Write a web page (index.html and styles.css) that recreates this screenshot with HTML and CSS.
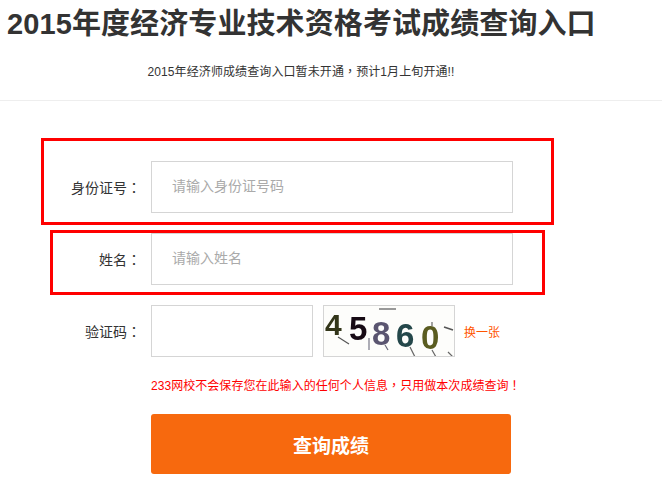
FILE: index.html
```html
<!DOCTYPE html>
<html>
<head>
<meta charset="UTF-8">
<title>2015年度经济专业技术资格考试成绩查询入口</title>
<link rel="stylesheet" href="styles.css">
</head>
<body>
<div class="header">
  <h1 class="title">2015年度经济专业技术资格考试成绩查询入口</h1>
  <p class="notice">2015年经济师成绩查询入口暂未开通<span class="punct">，</span>预计1月上旬开通!!</p>
</div>
<form class="form">
  <div class="row">
    <label class="label">身份证号<span class="punct">：</span></label>
    <input class="input" type="text" placeholder="请输入身份证号码">
  </div>
  <div class="row">
    <label class="label">姓名<span class="punct">：</span></label>
    <input class="input" type="text" placeholder="请输入姓名">
  </div>
  <div class="row">
    <label class="label">验证码<span class="punct">：</span></label>
    <input class="input input-code" type="text">
    <div class="captcha">
      <svg width="130" height="50" viewBox="0 0 130 50">
        <rect width="130" height="50" fill="#fdfdfb"/>
        <g fill="none" stroke-width="1.2">
          <path d="M55 3H72" stroke="#999" stroke-width="2"/>
          <path d="M14 31L25 38" stroke="#555"/>
          <path d="M45 32V44" stroke="#778"/>
          <path d="M61 39L64 44" stroke="#667"/>
          <path d="M86 41L91 51" stroke="#666"/>
          <path d="M108 16V20M108 44L112 51M124 46L129 51" stroke="#666"/>
          <path d="M120 21L129 24" stroke="#555" stroke-width="1.5"/>
        </g>
        <text class="digit digit-small" x="1" y="29" fill="#33361a">4</text>
        <text class="digit" x="25" y="34" fill="#160a14">5</text>
        <text class="digit" x="48" y="39" fill="#5a5570">8</text>
        <text class="digit" x="72" y="41" fill="#24474a">6</text>
        <text class="digit" x="97" y="43" fill="#5a5c20">0</text>
      </svg>
    </div>
    <a class="change" href="#">换一张</a>
  </div>
  <p class="tip">233网校不会保存您在此输入的任何个人信息<span class="punct">，</span>只用做本次成绩查询<span class="punct">！</span></p>
  <button class="submit" type="button">查询成绩</button>
</form>
<div class="mark mark-id"></div>
<div class="mark mark-name"></div>
</body>
</html>
```
FILE: styles.css
```css
body {
  margin: 0;
  background: #fff;
  color: #333;
  font-family: "Liberation Sans", "Noto Sans CJK SC", sans-serif;
  font-size: 14px;
}

.header {
  height: 100px;
  border-bottom: 1px solid #eee;
}

.title {
  margin: 0;
  padding: 7px 0 0 7px;
  font-size: 29px;
  line-height: 35px;
  font-weight: bold;
  letter-spacing: 0.1px;
  white-space: nowrap;
}

.notice {
  margin: 21px 0 0;
  padding-right: 60px;
  font-size: 12px;
  line-height: 16px;
  letter-spacing: 0.1px;
  text-align: center;
}

/* centred fullwidth punctuation */
.punct {
  font-family: "Noto Sans CJK TC", sans-serif;
}

.form {
  padding-top: 60px;
}

.row {
  display: flex;
  align-items: center;
  height: 52px;
  margin-bottom: 20px;
}

.label {
  flex: none;
  width: 141px;
  margin-right: 10px;
  text-align: right;
  font-size: 14px;
}

.input {
  width: 362px;
  height: 52px;
  box-sizing: border-box;
  border: 1px solid #d5d5d5;
  padding: 0 20px 2px;
  font-family: inherit;
  font-size: 14px;
  outline: none;
}

.input::placeholder {
  color: #aaa;
}

.input-code {
  width: 162px;
}

.captcha {
  width: 132px;
  height: 52px;
  margin-left: 10px;
  box-sizing: border-box;
  border: 1px solid #d5d5d5;
}

.captcha svg {
  display: block;
  filter: blur(0.4px);
}

.digit {
  font-family: "Liberation Sans", sans-serif;
  font-size: 33px;
  font-weight: bold;
}

.digit-small {
  font-size: 30px;
}

.change {
  margin-left: 9px;
  font-size: 12px;
  color: #f50;
  text-decoration: none;
}

.tip {
  margin: 0 0 0 151px;
  font-size: 12px;
  line-height: 16px;
  letter-spacing: 0.05px;
  color: #f00;
  white-space: nowrap;
}

.submit {
  display: block;
  width: 360px;
  height: 60px;
  margin: 20px 0 0 151px;
  border: 0;
  border-radius: 3px;
  background: #f7690e;
  color: #fff;
  font-family: "Liberation Serif", "Noto Sans CJK SC", serif;
  font-size: 19px;
  font-weight: bold;
}

.mark {
  position: absolute;
  box-sizing: border-box;
  border: 3px solid #f00;
}

.mark-id {
  left: 41px;
  top: 138px;
  width: 513px;
  height: 87px;
}

.mark-name {
  left: 50px;
  top: 230px;
  width: 495px;
  height: 65px;
}
```
